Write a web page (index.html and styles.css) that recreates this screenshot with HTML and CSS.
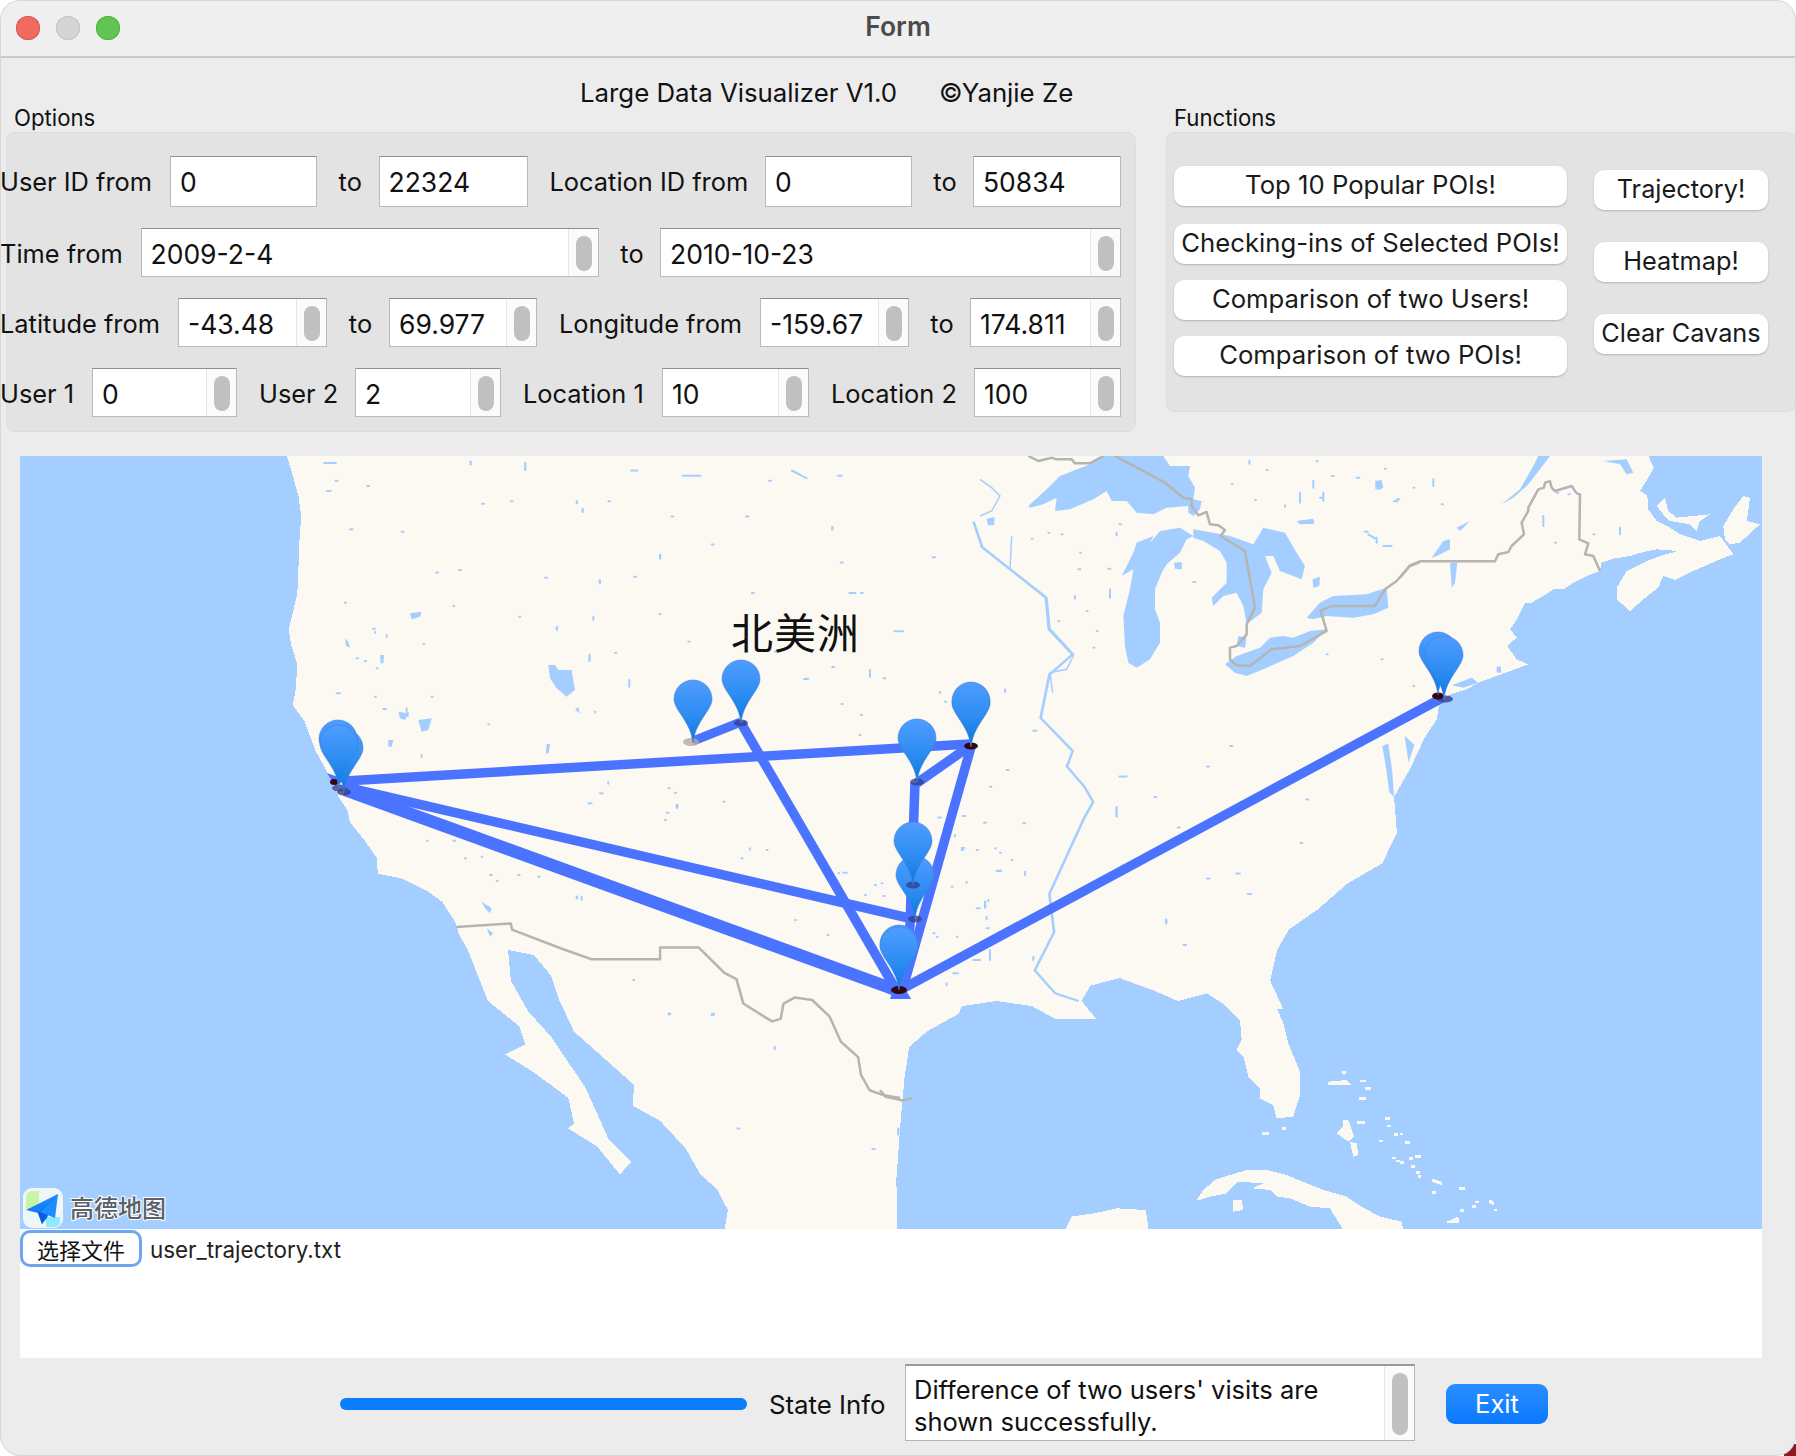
FILE: index.html
```html
<!DOCTYPE html>
<html lang="en">
<head>
<meta charset="utf-8">
<title>Form</title>
<link rel="stylesheet" href="styles.css">
</head>
<body>
<div class="corner"></div>
<div class="window">
  <header class="titlebar">
    <div class="lights"><span class="light red"></span><span class="light grey"></span><span class="light green"></span></div>
    <div class="title">Form</div>
  </header>

  <div class="heading"><span>Large Data Visualizer V1.0</span><span class="credit">©Yanjie Ze</span></div>

  <div class="panels">
    <section class="options">
      <div class="group-label">Options</div>
      <div class="panel opt-panel">
        <div class="row r1">
          <label class="lb">User ID from</label><div class="field"><span class="val">0</span></div>
          <label class="to">to</label><div class="field"><span class="val">22324</span></div>
          <label class="lb in">Location ID from</label><div class="field"><span class="val">0</span></div>
          <label class="to">to</label><div class="field"><span class="val">50834</span></div>
        </div>
        <div class="row r2">
          <label class="lb">Time from</label><div class="field"><span class="val">2009-2-4</span><span class="spin"><i></i></span></div>
          <label class="to">to</label><div class="field"><span class="val">2010-10-23</span><span class="spin"><i></i></span></div>
        </div>
        <div class="row r3">
          <label class="lb">Latitude from</label><div class="field"><span class="val">-43.48</span><span class="spin"><i></i></span></div>
          <label class="to">to</label><div class="field"><span class="val">69.977</span><span class="spin"><i></i></span></div>
          <label class="lb in">Longitude from</label><div class="field"><span class="val">-159.67</span><span class="spin"><i></i></span></div>
          <label class="to">to</label><div class="field"><span class="val">174.811</span><span class="spin"><i></i></span></div>
        </div>
        <div class="row r4">
          <label class="lb">User 1</label><div class="field"><span class="val">0</span><span class="spin"><i></i></span></div>
          <label class="lb in">User 2</label><div class="field"><span class="val">2</span><span class="spin"><i></i></span></div>
          <label class="lb in">Location 1</label><div class="field"><span class="val">10</span><span class="spin"><i></i></span></div>
          <label class="lb in">Location 2</label><div class="field"><span class="val">100</span><span class="spin"><i></i></span></div>
        </div>
      </div>
    </section>
    <section class="functions">
      <div class="group-label">Functions</div>
      <div class="panel fn-panel">
        <div class="fn-left">
          <button class="btn">Top 10 Popular POIs!</button>
          <button class="btn second">Checking-ins of Selected POIs!</button>
          <button class="btn">Comparison of two Users!</button>
          <button class="btn">Comparison of two POIs!</button>
        </div>
        <div class="fn-right">
          <button class="btn">Trajectory!</button>
          <button class="btn">Heatmap!</button>
          <button class="btn">Clear Cavans</button>
        </div>
      </div>
    </section>
  </div>

  <div class="canvas">
    <svg class="map" viewBox="20 456 1742 773" width="1742" height="773" xmlns="http://www.w3.org/2000/svg">
      <defs>
        <linearGradient id="pinfill" x1="0" y1="0" x2="0" y2="1">
          <stop offset="0" stop-color="#4f9dff"/>
          <stop offset=".55" stop-color="#2e8cf2"/>
          <stop offset="1" stop-color="#0a79dc"/>
        </linearGradient>
        <linearGradient id="plane" x1="0" y1="0" x2="0" y2="1">
          <stop offset="0" stop-color="#1e90ff"/>
          <stop offset="1" stop-color="#0a6cf0"/>
        </linearGradient>
        <g id="pin">
          <path d="M0 0C-1.500-14-8-22-15-33C-18-38-19-41-19-44A19 19 0 1 1 19-44C19-41 18-38 15-33C8-22 1.500-14 0 0Z" fill="url(#pinfill)" stroke="#3a7fd8" stroke-opacity=".55"/>
        </g>
      </defs>
      <rect class="ocean" x="20" y="456" width="1742" height="773"/>

      <!-- land: west -->
      <g transform="translate(0 440) scale(.574 .51)" class="land">
        <polygon points="497,20 510,70 520,110 525,150 522,190 520,250 518,300 510,340 503,370 507,400 518,440 515,490 510,520 530,550 550,610 572,655 590,700 605,725 610,750 635,785 657,820 658,850 700,860 745,885 770,905 793,945 800,970 815,1000 850,1100 905,1150 915,1185 880,1205 930,1240 990,1290 1000,1340 990,1350 1040,1385 1080,1440 1100,1415 1060,1370 1040,1320 1020,1270 990,1220 960,1170 920,1120 890,1060 885,1000 930,1010 960,1050 975,1100 1000,1160 1050,1210 1105,1265 1102,1305 1150,1335 1195,1390 1220,1440 1250,1470 1268,1510 1262,1550 1560,1550 1560,20"/>
      </g>
      <!-- land: east mainland -->
      <g transform="translate(880 440) scale(.5841 .51)" class="land">
        <polygon points="0,20 960,20 960,510 950,540 930,590 905,650 880,700 885,770 860,830 800,870 750,920 700,960 680,1000 668,1060 690,1115 600,1115 560,1085 510,1100 470,1080 410,1055 360,1070 345,1100 370,1135 300,1135 260,1110 200,1100 140,1110 135,1125 80,1160 50,1190 42,1250 35,1340 28,1450 30,1550 0,1550"/>
      </g>
      <!-- land: north-east -->
      <g transform="translate(1400 456) scale(.3333)" class="land">
        <polygon points="0,0 745,0 762,35 745,65 720,105 742,118 745,160 770,195 810,215 840,235 900,255 960,240 975,260 1000,295 960,310 880,345 825,372 790,360 775,395 730,430 690,465 650,430 650,395 680,345 740,315 790,297 835,285 770,280 730,288 690,300 640,308 605,320 600,345 560,360 520,380 490,400 460,400 430,420 395,440 375,440 350,490 330,520 350,545 322,570 350,610 385,625 345,640 290,660 235,680 200,700 150,715 120,735 110,790 55,875 40,920 0,990"/>
        <polygon points="970,210 1000,160 1030,120 1050,125 1045,165 1040,195 1080,205 1020,260 990,265 975,250"/>
        <polygon points="770,150 795,125 805,165 830,185 930,175 900,195 890,225 870,205 810,195 790,175"/>
      </g>
      <!-- islands -->
      <g transform="translate(1180 1000) scale(.3333)" class="land">
        <polygon points="120,0 180,60 185,120 170,150 190,170 205,230 240,265 240,295 280,315 290,355 340,350 360,285 360,215 325,130 310,70 280,0"/>
        <polygon points="50,600 70,570 105,540 150,525 200,510 260,510 320,525 380,550 430,570 500,590 545,620 600,650 665,665 670,690 490,690 465,650 450,625 390,620 330,595 290,590 270,570 215,565 250,550 175,545 140,580 90,590 60,600"/>
        <polygon points="160,600 185,600 190,630 160,635"/>
        <polygon points="490,360 505,360 522,410 505,425 470,400 490,380"/>
        <polygon points="510,425 530,430 535,465 520,470"/>
        <polygon points="445,245 500,240 515,255 445,255"/>
        <polygon points="800,665 835,650 838,670 800,670"/>
        <polygon points="755,535 785,545 785,555 755,545"/>
        <polygon points="925,600 940,602 942,615 930,612"/>
        <path d="M540 295h15M560 265h10M545 243h8M490 218h4M535 368h16M620 355h6M625 378h4M645 403h4M663 402h3M678 428h7M600 423h5M640 474h3M652 483h4M663 488h4M690 476h4M710 470h10M698 500h2M712 518h4M717 530h3M760 578h3M840 566h12M845 632h3M890 606h2M880 620h3M945 630h3M250 400h12M310 385h4" class="land-dots"/>
      </g>
      <g transform="translate(900 1160) scale(.5714 .3333)" class="land">
        <polygon points="290,207 300,170 340,160 380,145 430,150 435,207"/>
      </g>

      <!-- lakes -->
      <g transform="translate(980 456) scale(.3333)" class="water">
        <polygon points="145,150 200,100 240,60 330,25 370,0 550,0 570,30 630,30 625,60 645,95 640,130 665,135 660,160 640,180 625,170 625,150 560,155 520,175 470,170 440,135 395,135 380,105 340,130 270,160 225,165 230,125 190,145 150,155"/>
        <polygon points="425,360 460,290 470,260 520,240 510,260 540,225 600,215 640,240 620,250 600,290 560,325 545,350 525,400 525,460 540,500 540,560 510,610 470,635 445,620 435,570 430,480 450,400 460,340"/>
        <polygon points="640,220 700,230 750,240 820,265 850,215 915,230 950,290 975,330 965,370 900,345 880,300 855,300 875,350 850,400 845,470 800,505 790,450 770,410 730,420 700,450 695,425 740,380 740,320 720,285 670,255 640,245"/>
        <polygon points="775,540 800,545 795,575 770,570"/>
        <polygon points="735,625 770,600 840,575 870,545 910,540 940,545 990,525 1040,520 1000,560 940,600 850,640 800,660 765,650"/>
        <polygon points="980,485 1020,440 1060,420 1160,415 1220,395 1225,455 1180,475 1120,485 1040,480 1000,490"/>
        <polygon points="950,195 1000,188 1003,203 960,205"/>
        <polygon points="998,370 1020,362 1018,390 1000,395"/>
        <polygon points="1185,75 1205,72 1210,95 1195,103"/>
        <polygon points="20,188 44,184 42,208 24,208"/>
        <polygon points="582,320 605,318 606,340 585,338"/>
        <polyline class="river" points="0,270 90,340 195,420 205,520 280,600 260,640 210,650 218,710"/>
        <polyline class="river" points="95,240 90,340"/>
        <polyline class="river" points="0,70 35,95 60,120 35,165 0,180"/>
        <path class="dots9" d="M808 15v8M1010 15h3M1055 60h6M1130 65h8M860 42h3M1215 38h3M1300 95h3M755 85h3M825 132h3M915 148v4M960 110v30M1000 75v20M1020 125h10M1030 110v25M1250 130h8M1165 235l20 12M1190 245v15M1210 270h25M300 290h3M295 340h6M385 338h6M285 420v8M390 400v25M640 378h6M205 230h3M245 235h3M155 248h3M410 230v8M320 465h3M350 525h3M235 495h3M340 575h3M1040 595h3M1205 610h3M1300 690h3"/>
      </g>
      <g transform="translate(1400 456) scale(.3333)" class="water">
        <polygon points="360,100 400,30 415,0 450,0 420,40 385,85 340,125 305,145"/>
        <polygon points="170,215 210,195 180,225"/>
        <polygon points="95,305 130,255 150,250 150,280 110,300"/>
        <polygon points="150,320 172,320 165,380 155,395"/>
        <polygon points="610,15 680,10 700,50 680,55 660,25"/>
        <polygon points="155,688 215,665 235,680 190,695"/>
        <polygon points="290,632 303,632 303,650 290,650"/>
        <path class="dots9" d="M100 70v20M125 145h4M430 180v30M470 110h5M505 115h5M660 215v20M580 235h4M465 260h3"/>
      </g>
      <g transform="translate(880 440) scale(.5841 .51)" class="water">
        <polygon points="860,600 870,595 877,650 880,700 872,690 866,640"/>
        <polygon points="898,580 915,598 905,632"/>
        <polyline class="river" points="160,160 175,210 285,310 290,370 330,420 290,460 275,545 330,610 320,640 350,680 365,710 350,740 310,840 290,890 298,965 265,1040 300,1085 340,1100"/>
        <path class="dots8" d="M410 660h12M490 940v8M520 990h4M405 720v18M610 850h6M630 890h5M140 800h4M200 845h6M180 905v12M100 740h4M90 230h4M25 375h14M410 165h3M720 160h18M850 85v10M880 120h6M830 180h5M745 275v10M655 195v8M560 860h4M600 600h3M560 640h3M470 700h3M730 705h3M510 760h3M415 835h3M720 790h3"/>
      </g>
      <g transform="translate(280 600) scale(.3333)" class="water">
        <polygon points="805,195 825,195 835,210 875,210 885,270 860,290 830,265 810,235"/>
        <polygon points="415,360 455,355 445,390 425,395"/>
        <polygon points="325,420 340,420 335,440 325,440"/>
        <polygon points="300,165 312,165 310,190 302,190"/>
        <polygon points="800,432 810,432 806,460 798,460"/>
        <polygon points="390,40 425,35 420,50 395,58"/>
        <polygon points="195,115 205,125 210,142 198,138"/>
        <polygon points="605,905 635,925 630,940 615,925"/>
        <polygon points="620,985 640,1000 630,1010"/>
        <polygon points="355,335 385,340 375,360 360,355"/>
        <polygon points="825,85 835,75 833,95"/>
        <polygon points="925,165 932,160 932,185 925,185"/>
        <polygon points="885,330 895,320 900,340"/>
        <polygon points="940,330 950,335 945,342"/>
        <path class="dots5" d="M195 8h3M520 18h3M718 50h3M940 50v10M1005 158h4M1048 240v20M1225 125h4M1138 42h3M285 95v3M320 105v6M430 133h3M230 175h4M255 183h3M290 205h3M170 280h10M285 290h3M455 290h3M310 327h8M380 325v8M625 373h3M425 465v6M985 545v6M960 580h8M925 610h10M1165 565h4M1185 578h4M1190 615v8M1160 638h6M1155 660h3M1330 605h3M1410 745v4M1460 750h3M1385 775h3M555 775h3M605 770h3M630 825h6M715 825h4M650 842h4M775 830h4M520 722h6M440 722h3M905 890v10M1060 1140h3M1168 1240v4M1295 1245h6"/>
      </g>
      <g transform="translate(780 660) scale(.3333)" class="water">
        <path class="dots5" d="M72 57h8M270 30v20M310 55h6M185 132h3M243 165h3M238 225h3M495 125h4M480 95v4M675 88v8M760 212h10M680 330h6M630 380h4M548 468h8M612 488h6M730 490h6M525 525v4M545 570h4M590 570h4M645 565h3M660 578h3M695 600h3M650 632h14M735 635v10M560 665v4M515 680h3M285 675h3M305 670h3M310 708h3M255 705h3M175 640h3M190 638h10M45 780h3M142 825h3M590 745h10M625 720v4M620 770v8M620 805h6M460 820h4M470 830h4M530 830h3M630 870v30M580 900h20M520 940h14M500 970v6M760 890v10"/>
      </g>
      <g transform="translate(0 440) scale(.574 .51)" class="water">
        <path class="dots7" d="M565 45h20M585 80h3M570 100h6M820 42v6M915 45v14M1190 70h30M1100 60h10M1380 60l25 15M1450 170v6M1465 240h3M1045 275v6M1105 268h3M800 255h3M890 120h3M1005 120v4M1150 225v8M1015 135v6M1480 300h10M1310 300h3M1350 415h3M1450 445h3M1405 468h3M1350 1190v4M1240 1125h4M1165 1125h3M1285 1350h3M1520 1390h4M1565 1350v12M1005 895v4M1180 715v6M610 175h4M650 370h3M710 535v6M740 555h8M760 260h3M840 125h3M700 180h3M1060 120h3M1170 150h3M950 270h3M1240 205h3M1300 150h4M1500 300h3M1340 80h3M1460 70h6M640 90h3"/>
      </g>

      <!-- borders -->
      <g class="border">
        <polyline transform="translate(0 440) scale(.574 .51)" points="795,955 890,948 892,960 980,998 1030,1018 1150,1018 1150,995 1217,995 1262,1045 1283,1057 1295,1105 1345,1140 1360,1135 1365,1105 1385,1093 1415,1098 1445,1130 1465,1180 1495,1210 1500,1245 1515,1275 1540,1285 1568,1290"/>
        <polyline transform="translate(880 440) scale(.5841 .51)" points="0,1275 10,1288 40,1295 55,1290"/>
        <polyline transform="translate(980 456) scale(.3333)" points="145,0 175,15 215,5 230,10 275,10 285,22 330,22 370,0"/>
        <polyline transform="translate(980 456) scale(.3333)" points="405,0 555,80 610,125 635,130 635,150 655,178 680,168 690,205 715,208 735,222 722,240 795,285 825,455 800,505 800,535 770,570 750,575 750,610 770,628 810,630 875,580 960,570 1040,525 1022,465 1055,450 1185,450 1215,400 1250,375 1290,330 1320,318"/>
        <polyline transform="translate(1400 456) scale(.3333)" points="0,365 30,328 60,316 285,316 295,295 325,288 335,270 372,235 365,200 385,165 385,155 415,100 432,95 435,80 450,76 455,95 465,105 515,90 530,112 540,115 538,250 565,262 555,295 580,300 600,345"/>
      </g>

      <!-- routes -->
      <g class="routes">
        <line class="w8" x1="345" y1="781" x2="970" y2="744"/>
        <line class="w10" x1="345" y1="790" x2="896" y2="990"/>
        <line class="w8" x1="345" y1="787" x2="913" y2="919"/>
        <line class="w7" x1="693" y1="741" x2="741" y2="722"/>
        <line class="w8" x1="741" y1="723" x2="895" y2="988"/>
        <line class="w8" x1="971" y1="747" x2="903" y2="988"/>
        <line class="w8" x1="970" y1="746" x2="917" y2="783"/>
        <polyline class="w8" points="915,783 910,925 902,985"/>
        <line class="w8" x1="902" y1="989" x2="1442" y2="698"/>
        <polygon class="tip" points="895,985 890,999 911,999 903,985"/>
        <polygon class="tip" points="327,773 335,786 346,780"/>
      </g>

      <!-- labels -->
      <text class="continent" x="731" y="649">北美洲</text>

      <!-- markers -->
      <ellipse class="sh-pale" cx="691" cy="742" rx="8" ry="4"/>
      <use href="#pin" x="693" y="743"/>
      <ellipse class="sh-blue" cx="741" cy="723" rx="7" ry="3.500"/>
      <use href="#pin" x="741" y="723"/>
      <ellipse class="sh-dark" cx="334" cy="782" rx="4" ry="3"/>
      <ellipse class="sh-blue" cx="339" cy="788" rx="7" ry="3.500"/>
      <ellipse class="sh-blue" cx="344" cy="792" rx="7" ry="3.500"/>
      <use href="#pin" x="344" y="792"/>
      <use href="#pin" x="338" y="783"/>
      <use href="#pin" x="339" y="788"/>
      <ellipse class="sh-dark" cx="971" cy="746" rx="7" ry="3.500"/>
      <use href="#pin" x="971" y="747"/>
      <use href="#pin" x="971" y="745"/>
      <ellipse class="sh-blue" cx="917" cy="782" rx="7" ry="3.500"/>
      <use href="#pin" x="917" y="782"/>
      <ellipse class="sh-blue" cx="915" cy="919" rx="7" ry="3.500"/>
      <use href="#pin" x="915" y="919"/>
      <ellipse class="sh-blue" cx="913" cy="885" rx="7" ry="3.500"/>
      <use href="#pin" x="913" y="885"/>
      <ellipse class="sh-dark" cx="899" cy="990" rx="8" ry="4"/>
      <use href="#pin" x="899" y="988"/>
      <use href="#pin" x="899" y="990"/>
      <ellipse class="sh-blue" cx="1445" cy="699" rx="8" ry="3.500"/>
      <ellipse class="sh-dark" cx="1438" cy="696" rx="6" ry="3.500"/>
      <use href="#pin" x="1438" y="695"/>
      <use href="#pin" x="1444" y="699"/>

      <!-- provider logo -->
      <g>
        <rect x="23" y="1188" width="40" height="40" rx="9" fill="#eef6f8"/>
        <path d="M26 1197a6 6 0 0 1 6-6h7v18H26z" fill="#c6f5a4"/>
        <path d="M46 1217h14v5a5 5 0 0 1-5 5h-9z" fill="#8fe9ff"/>
        <path d="M58 1194L26 1210L38 1213L42 1224L47 1218Z" fill="url(#plane)"/>
        <path d="M58 1194L38 1213L42 1224Z" fill="#0a5ce0"/>
        <path d="M58 1194L40 1212L55 1218Z" fill="#1b8dff"/>
        <text class="brand" x="70" y="1217">高德地图</text>
      </g>
    </svg>
    <div class="file-row">
      <button class="file-btn">选择文件</button>
      <span class="file-name">user_trajectory.txt</span>
    </div>
  </div>

  <footer class="footer">
    <div class="progress"></div>
    <span class="state-label">State Info</span>
    <div class="state-box">
      <div class="state-text">Difference of two users' visits are shown successfully.</div>
      <span class="spin"><i></i></span>
    </div>
    <button class="exit">Exit</button>
  </footer>
</div>
</body>
</html>
```
FILE: styles.css
```css
* { box-sizing: border-box; }
html, body { margin: 0; padding: 0; background: #fff; }
body { position: relative; width: 1796px; height: 1456px; overflow: hidden; font-family: Inter, "Liberation Sans", "Noto Sans CJK SC", sans-serif; color: #111; }

.corner { position: absolute; right: 0; bottom: 0; width: 12px; height: 12px; background: #8c1a1e; }

.window { position: relative; width: 1796px; height: 1456px; background: #ececec; border-radius: 20px; overflow: hidden; }
.window::after { content: ""; position: absolute; inset: 0; border: 1px solid #d6d6d6; border-radius: 20px; pointer-events: none; }

.titlebar { position: relative; display: flex; align-items: center; justify-content: center; height: 58px; padding-bottom: 3px; background: #efefef; border-bottom: 2px solid #c9c9c9; }
.lights { position: absolute; left: 16px; top: 16px; display: flex; gap: 16px; }
.light { width: 24px; height: 24px; border-radius: 50%; }
.red { background: #ef6b60; box-shadow: inset 0 0 0 1px #dd5a50; }
.grey { background: #d5d5d5; box-shadow: inset 0 0 0 1px #c2c2c2; }
.green { background: #61c554; box-shadow: inset 0 0 0 1px #52b346; }
.title { font-size: 26.500px; font-weight: 600; color: #4b4b4b; line-height: 1; }

.heading { display: flex; align-items: flex-start; height: 48px; padding: 20px 0 0 580px; font-size: 25.800px; line-height: 30px; }
.credit { margin-left: 42px; }

.panels { display: flex; height: 326px; }
.options { width: 1166px; }
.functions { width: 630px; }
.group-label { height: 26px; padding-left: 14px; font-size: 22.200px; line-height: 24px; color: #111; }
.functions .group-label { padding-left: 8px; }

.panel { background: #e3e3e3; border: 1px solid #dddddd; border-radius: 9px; }
.opt-panel { width: 1130px; height: 300px; margin-left: 6px; padding-top: 23px; display: flex; flex-direction: column; gap: 21px; }
.fn-panel { width: 630px; height: 280px; display: flex; gap: 27px; padding-left: 7px; }

.row { display: grid; align-items: stretch; margin-left: -7px; width: 1121px; height: 49px; font-size: 25.400px; }
.r1 { height: 51px; grid-template-columns: 170px 147px 61.500px 149px 237.500px 147px 61px 148px; }
.r2 { grid-template-columns: 140.500px 458.500px 61px 461px; }
.r3 { grid-template-columns: 178px 149px 62px 148px 223px 149px 61px 151px; }
.r4 { grid-template-columns: 92px 145px 118px 146px 161px 147px 165px 147px; }

.lb, .to { display: flex; align-items: center; white-space: nowrap; }
.r2 .lb, .r2 .to { padding-top: 1px; }
.r3 .lb, .r3 .to, .r4 .lb, .r4 .to { padding-top: 2px; }
.to { justify-content: center; padding-left: 5px; }
.in { padding-left: 22px; }

.field { display: flex; background: #fff; border: 1px solid #b9b9b9; border-top-color: #8e8e8e; min-width: 0; }
.val { flex: 1; padding-left: 9px; align-self: center; white-space: nowrap; font-size: 26.500px; }
.r2 .val { position: relative; top: 1px; }
.r3 .val, .r4 .val { position: relative; top: 1px; }
.spin { display: flex; justify-content: center; width: 30px; flex: none; padding: 7px 0 5px; background: #fbfbfb; border-left: 1px solid #e6e6e6; }
.spin i { display: block; width: 16px; background: #c0c0c0; border-radius: 8px; }

.fn-left { display: flex; flex-direction: column; gap: 16px; width: 393px; padding-top: 33px; }
.fn-right { display: flex; flex-direction: column; gap: 32px; width: 174px; padding-top: 37px; }
.btn { height: 40px; padding: 0; background: #fff; border: 0; border-radius: 10px; box-shadow: 0 1px 2px rgba(0,0,0,.22); font: 25.700px/38px Inter, "Liberation Sans", sans-serif; color: #1a1a1a; white-space: nowrap; display: flex; align-items: center; justify-content: center; }
.fn-left .btn { padding-bottom: 2px; }
.fn-right .btn { font-size: 25.300px; padding-bottom: 2px; }
.second { margin-top: 2px; }

.canvas { width: 1742px; height: 902px; margin: 24px 0 0 20px; background: #fff; }
.map { display: block; }
.ocean { fill: #a4ceff; }
.land { fill: #fcf9f2; shape-rendering: crispEdges; }
.land-dots { fill: none; stroke: #fcf9f2; stroke-width: 8; stroke-linecap: square; }
.water { fill: #a4ceff; }
.river { fill: none; stroke: #a4ceff; stroke-width: 4.500; }
.dots5, .dots9 { fill: none; stroke: #a4ceff; stroke-width: 6; stroke-linecap: round; }
.dots7, .dots8 { fill: none; stroke: #a4ceff; stroke-width: 4; stroke-linecap: round; }
.border polyline { fill: none; stroke: #b6b4b1; stroke-width: 2.500px; vector-effect: non-scaling-stroke; stroke-linejoin: round; }
.routes { fill: none; stroke: #4a74ff; }
.tip { fill: #4a74ff; stroke: none; }
.w7 { stroke-width: 9; }
.w8 { stroke-width: 9.500; }
.w10 { stroke-width: 12.500; }
.continent { font: 42px "Noto Sans CJK SC", sans-serif; fill: #111; letter-spacing: 1px; }
.sh-dark { fill: #35060f; }
.sh-blue { fill: #33408f; fill-opacity: .8; }
.sh-pale { fill: #b9a9a0; fill-opacity: .8; }
.brand { font: 500 24px "Noto Sans CJK SC", sans-serif; fill: #5a6068; stroke: #fff; stroke-width: 2px; paint-order: stroke; letter-spacing: 0; }

.file-row { display: flex; align-items: flex-start; height: 129px; padding-top: 1px; gap: 8px; }
.file-btn { width: 122px; height: 37px; padding: 0; background: #fff; border: 3px solid #6fa6f0; border-radius: 10px; font: 22px/1 "Noto Sans CJK SC", sans-serif; color: #111; }
.file-name { font-size: 22.400px; line-height: 39px; color: #222; }

.footer { display: flex; align-items: center; height: 92px; padding-left: 340px; }
.progress { width: 407px; height: 12px; background: #0a7dff; border-radius: 6px; }
.state-label { margin-left: 22px; width: 136px; font-size: 25.800px; white-space: nowrap; }
.state-box { display: flex; width: 510px; height: 77px; margin-top: -4px; background: #fff; border: 1px solid #b5b5b5; border-top: 2px solid #9a9a9a; }
.state-text { flex: 1; padding: 8px 0 0 8px; font-size: 25.500px; line-height: 32px; }
.exit { width: 102px; height: 40px; margin-left: 31px; padding: 0; border: 0; border-radius: 9px; background: linear-gradient(#2a8fff, #0a78ff); color: #fff; font: 25.500px/1 Inter, "Liberation Sans", sans-serif; }
```
